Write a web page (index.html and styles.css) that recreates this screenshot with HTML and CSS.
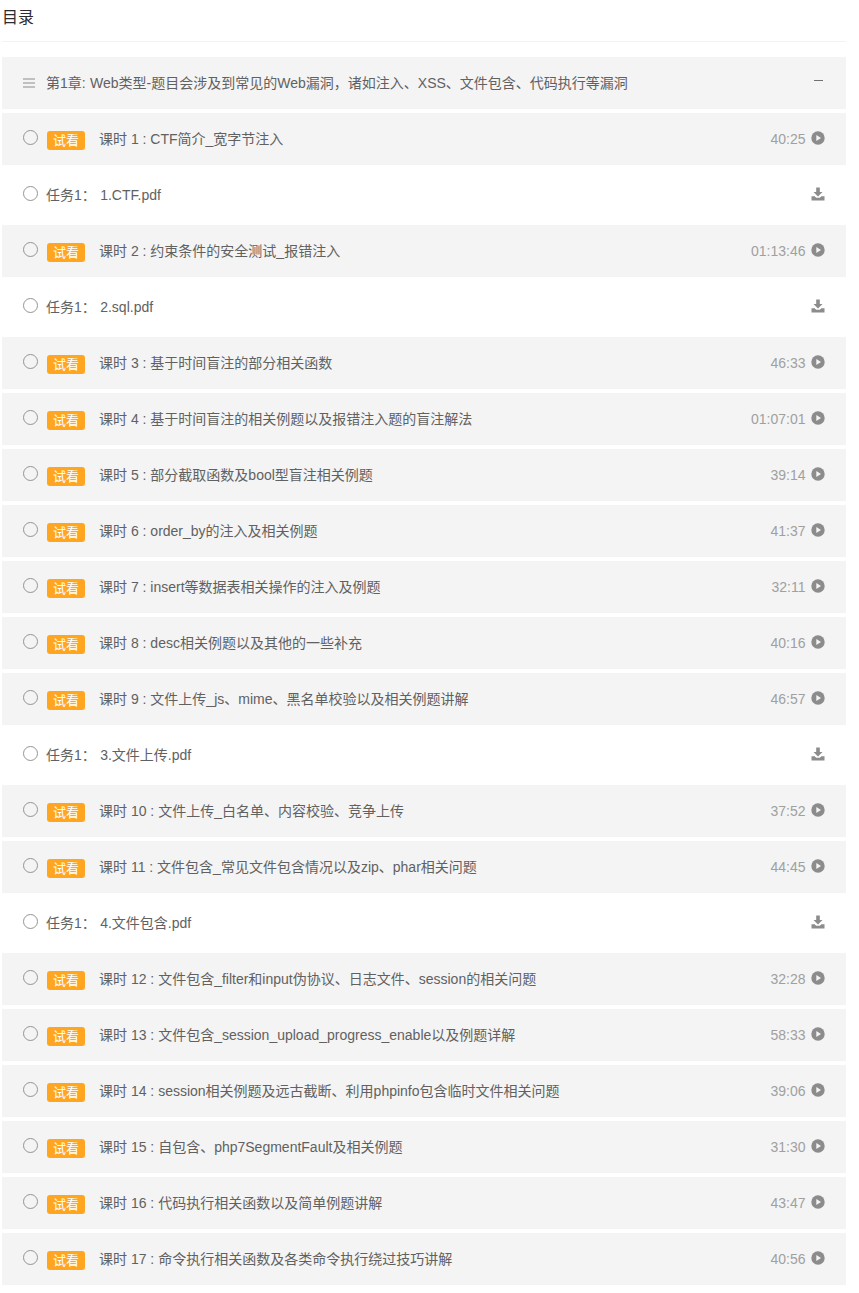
FILE: index.html
```html
<!DOCTYPE html>
<html lang="zh">
<head>
<meta charset="utf-8">
<title>目录</title>
<link rel="stylesheet" href="styles.css">
<svg class="defs" width="0" height="0" aria-hidden="true">
  <symbol id="play" viewBox="0 0 14 14"><circle cx="7" cy="7" r="6.7" fill="#8c8c8c"/><path d="M5.3 3.9 10 7l-4.7 3.1z" fill="#f4f4f4"/></symbol>
  <symbol id="dl" viewBox="0 0 14 14"><path d="M5.2 0.5h3.6v4.6h2.7L7 9.6 2.5 5.1h2.7z" fill="#8c8c8c"/><path d="M0.5 9.2h3.2l1.4 1.5h3.8l1.4-1.5h3.2v4.3H0.5z" fill="#8c8c8c"/></symbol>
</svg>
</head>
<body>
<main class="page">
  <h2 class="title">目录</h2>
  <ul class="list">
    <li class="row"><svg class="menu" viewBox="0 0 12 10"><path d="M0 1h12M0 5h12M0 9h12" stroke="#8c8c8c" stroke-width="1.2"/></svg><span class="chapter">第1章: Web类型-题目会涉及到常见的Web漏洞，诸如注入、XSS、文件包含、代码执行等漏洞</span><span class="minus"></span></li>
    <li class="row"><i class="radio"></i><b class="tag">试看</b><span class="name">课时 1 : CTF简介_宽字节注入</span><span class="time">40:25</span><svg class="ico"><use href="#play"/></svg></li>
    <li class="row task"><i class="radio"></i><span class="tname">任务1： 1.CTF.pdf</span><svg class="ico"><use href="#dl"/></svg></li>
    <li class="row"><i class="radio"></i><b class="tag">试看</b><span class="name">课时 2 : 约束条件的安全测试_报错注入</span><span class="time">01:13:46</span><svg class="ico"><use href="#play"/></svg></li>
    <li class="row task"><i class="radio"></i><span class="tname">任务1： 2.sql.pdf</span><svg class="ico"><use href="#dl"/></svg></li>
    <li class="row"><i class="radio"></i><b class="tag">试看</b><span class="name">课时 3 : 基于时间盲注的部分相关函数</span><span class="time">46:33</span><svg class="ico"><use href="#play"/></svg></li>
    <li class="row"><i class="radio"></i><b class="tag">试看</b><span class="name">课时 4 : 基于时间盲注的相关例题以及报错注入题的盲注解法</span><span class="time">01:07:01</span><svg class="ico"><use href="#play"/></svg></li>
    <li class="row"><i class="radio"></i><b class="tag">试看</b><span class="name">课时 5 : 部分截取函数及bool型盲注相关例题</span><span class="time">39:14</span><svg class="ico"><use href="#play"/></svg></li>
    <li class="row"><i class="radio"></i><b class="tag">试看</b><span class="name">课时 6 : order_by的注入及相关例题</span><span class="time">41:37</span><svg class="ico"><use href="#play"/></svg></li>
    <li class="row"><i class="radio"></i><b class="tag">试看</b><span class="name">课时 7 : insert等数据表相关操作的注入及例题</span><span class="time">32:11</span><svg class="ico"><use href="#play"/></svg></li>
    <li class="row"><i class="radio"></i><b class="tag">试看</b><span class="name">课时 8 : desc相关例题以及其他的一些补充</span><span class="time">40:16</span><svg class="ico"><use href="#play"/></svg></li>
    <li class="row"><i class="radio"></i><b class="tag">试看</b><span class="name">课时 9 : 文件上传_js、mime、黑名单校验以及相关例题讲解</span><span class="time">46:57</span><svg class="ico"><use href="#play"/></svg></li>
    <li class="row task"><i class="radio"></i><span class="tname">任务1： 3.文件上传.pdf</span><svg class="ico"><use href="#dl"/></svg></li>
    <li class="row"><i class="radio"></i><b class="tag">试看</b><span class="name">课时 10 : 文件上传_白名单、内容校验、竞争上传</span><span class="time">37:52</span><svg class="ico"><use href="#play"/></svg></li>
    <li class="row"><i class="radio"></i><b class="tag">试看</b><span class="name">课时 11 : 文件包含_常见文件包含情况以及zip、phar相关问题</span><span class="time">44:45</span><svg class="ico"><use href="#play"/></svg></li>
    <li class="row task"><i class="radio"></i><span class="tname">任务1： 4.文件包含.pdf</span><svg class="ico"><use href="#dl"/></svg></li>
    <li class="row"><i class="radio"></i><b class="tag">试看</b><span class="name">课时 12 : 文件包含_filter和input伪协议、日志文件、session的相关问题</span><span class="time">32:28</span><svg class="ico"><use href="#play"/></svg></li>
    <li class="row"><i class="radio"></i><b class="tag">试看</b><span class="name">课时 13 : 文件包含_session_upload_progress_enable以及例题详解</span><span class="time">58:33</span><svg class="ico"><use href="#play"/></svg></li>
    <li class="row"><i class="radio"></i><b class="tag">试看</b><span class="name">课时 14 : session相关例题及远古截断、利用phpinfo包含临时文件相关问题</span><span class="time">39:06</span><svg class="ico"><use href="#play"/></svg></li>
    <li class="row"><i class="radio"></i><b class="tag">试看</b><span class="name">课时 15 : 自包含、php7SegmentFault及相关例题</span><span class="time">31:30</span><svg class="ico"><use href="#play"/></svg></li>
    <li class="row"><i class="radio"></i><b class="tag">试看</b><span class="name">课时 16 : 代码执行相关函数以及简单例题讲解</span><span class="time">43:47</span><svg class="ico"><use href="#play"/></svg></li>
    <li class="row"><i class="radio"></i><b class="tag">试看</b><span class="name">课时 17 : 命令执行相关函数及各类命令执行绕过技巧讲解</span><span class="time">40:56</span><svg class="ico"><use href="#play"/></svg></li>
  </ul>
</main>
</body>
</html>
```
FILE: styles.css
```css
* { box-sizing: border-box; }
html, body { margin: 0; padding: 0; background: #fff; }
body { font-family: "Liberation Sans", "Noto Sans CJK SC", sans-serif; font-size: 14px; color: #616161; }
.defs { position: absolute; }
.page { width: 846px; padding-left: 2px; }
.title { margin: 0 0 15px; height: 42px; padding-top: 7px; font-size: 16px; line-height: 22px; font-weight: 400; color: #2b2b33; border-bottom: 1px solid #f3f3f3; }
.list { list-style: none; margin: 0; padding: 0; display: flex; flex-direction: column; gap: 4px; }
.row { display: flex; align-items: center; height: 52px; padding: 0 21.5px 0 21px; background: #f4f4f4; line-height: 20px; }
.task { background: #fff; }
.menu { width: 12px; height: 10px; margin-right: 11px; flex: none; }
.chapter { flex: 1; word-spacing: 0.5px; }
.minus { width: 9px; height: 1px; background: #707070; margin-right: 1.5px; margin-top: -6px; }
.radio { width: 15px; height: 15px; margin: -4px 9.5px 0 -0.5px; border: 1px solid #949494; border-radius: 50%; flex: none; }
.tag { width: 38px; height: 19px; margin: 2px 14px 0 0; border-radius: 3px; background: #ffa51f; color: #fff; font-size: 13px; font-weight: 400; line-height: 19px; text-align: center; flex: none; }
.name, .tname { flex: 1; }
.tname { margin-left: -1px; word-spacing: 0.5px; }
.time { color: #a0a0a0; margin-right: 5px; }
.ico { width: 14px; height: 14px; margin-top: -2px; flex: none; }
```
